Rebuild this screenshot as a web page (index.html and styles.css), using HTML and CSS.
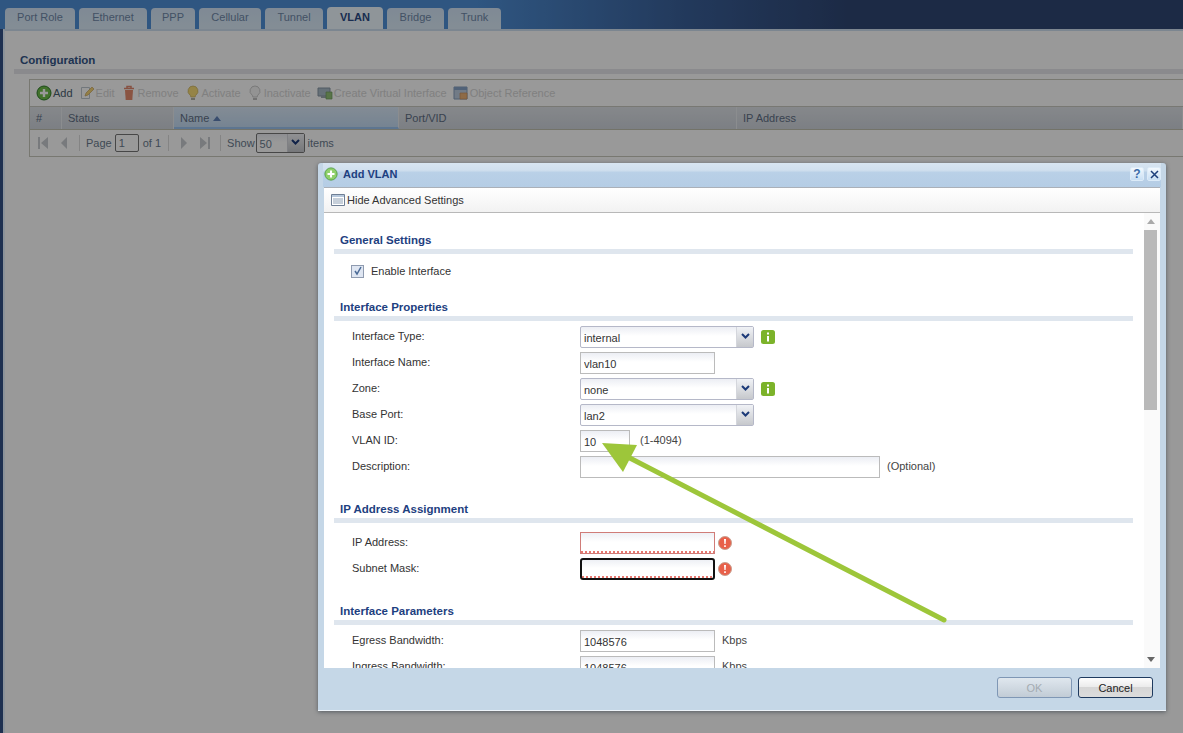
FILE: index.html
```html
<!DOCTYPE html>
<html lang="en">
<head>
<meta charset="utf-8">
<title>VLAN</title>
<link rel="stylesheet" href="styles.css">
</head>
<body>
<div class="app">
  <nav class="tabs">
    <a class="tab">Port Role</a><a class="tab">Ethernet</a><a class="tab">PPP</a><a class="tab">Cellular</a><a class="tab">Tunnel</a><a class="tab active">VLAN</a><a class="tab">Bridge</a><a class="tab">Trunk</a>
  </nav>
  <main class="panel">
    <h2 class="page-heading">Configuration</h2>
    <div class="grid-box">
      <div class="grid-toolbar">
        <span class="tool on"><svg class="ic" viewBox="0 0 16 16"><circle cx="8" cy="8" r="7" fill="#6fbf4a" stroke="#2f7d2a"/><path d="M8 4v8M4 8h8" stroke="#fff" stroke-width="2.4"/></svg>Add</span>
        <span class="tool"><svg class="ic" viewBox="0 0 16 16"><path d="M2.500 2.500h8v11h-8z" fill="#fff" stroke="#aab4c0"/><path d="M6 11l1-3 6-6 2 2-6 6z" fill="#f2c649" stroke="#b98a2a" stroke-width=".7"/></svg>Edit</span>
        <span class="tool"><svg class="ic" viewBox="0 0 16 16"><path d="M3 3.500h10M6 3V1.500h4V3" stroke="#d8603f" fill="none" stroke-width="1.500"/><path d="M4 5h8l-.7 10H4.700z" fill="#e0663f"/></svg>Remove</span>
        <span class="tool"><svg class="ic" viewBox="0 0 16 16"><path d="M8 1a5 5 0 0 0-3 9c.6.6.8 1 .8 2h4.400c0-1 .2-1.400.8-2a5 5 0 0 0-3-9z" fill="#f6d24a" stroke="#b8962a" stroke-width=".7"/><path d="M6 13h4v2H6z" fill="#9a9a8a"/></svg>Activate</span>
        <span class="tool"><svg class="ic" viewBox="0 0 16 16"><path d="M8 1a5 5 0 0 0-3 9c.6.6.8 1 .8 2h4.400c0-1 .2-1.400.8-2a5 5 0 0 0-3-9z" fill="#f4f4f4" stroke="#aaa" stroke-width=".8"/><path d="M6 13h4v2H6z" fill="#aaa"/></svg>Inactivate</span>
        <span class="tool"><svg class="ic" viewBox="0 0 16 16"><path d="M1 3h12v8H1z" fill="#8fa6b8" stroke="#5f7486"/><path d="M4 11h6v2H4z" fill="#7b8c98"/><path d="M9 7h6v7H9z" fill="#6fb04a" stroke="#3f7d2a" stroke-width=".7"/></svg>Create Virtual Interface</span>
        <span class="tool"><svg class="ic" viewBox="0 0 16 16"><path d="M1 2h13v12H1z" fill="#a9bdd6" stroke="#5f7fa6"/><path d="M1 2h13v3H1z" fill="#5f86b8"/><path d="M7 8h7v6H7z" fill="#e89a4a" stroke="#b56f2a" stroke-width=".7"/></svg>Object Reference</span>
      </div>
      <div class="grid-head">
        <div class="col">#</div>
        <div class="col">Status</div>
        <div class="col sorted">Name <svg class="sort" viewBox="0 0 8 5"><path d="M0 5l4-5 4 5z"/></svg></div>
        <div class="col">Port/VID</div>
        <div class="col">IP Address</div>
      </div>
      <div class="pager">
        <svg class="nav" viewBox="0 0 12 14"><path d="M1 1h2v12H1zM11 1v12L4 7z"/></svg>
        <svg class="nav" viewBox="0 0 12 14"><path d="M9 1v12L3 7z"/></svg>
        <i class="sep"></i>
        <span>Page</span>
        <input class="page-input" value="1" aria-label="Page">
        <span class="of-total">of 1</span>
        <i class="sep"></i>
        <svg class="nav nav-next" viewBox="0 0 12 14"><path d="M3 1v12l6-6z"/></svg>
        <svg class="nav" viewBox="0 0 12 14"><path d="M1 1v12l7-6zM9 1h2v12H9z"/></svg>
        <i class="sep"></i>
        <span>Show</span>
        <div class="combo page-size"><span class="combo-value">50</span><span class="combo-arrow"><svg viewBox="0 0 9 6"><path d="M1 1l3.500 3.500L8 1" fill="none" stroke="#1c3a78" stroke-width="2"/></svg></span></div>
        <span>items</span>
      </div>
    </div>
  </main>
</div>

<div class="overlay"></div>

<section class="dialog">
  <header class="dialog-title">
    <svg class="title-ic" viewBox="0 0 16 16"><circle cx="8" cy="8" r="7" fill="#8fd06a" stroke="#4f9d3f"/><path d="M8 4v8M4 8h8" stroke="#fff" stroke-width="2.400"/></svg>
    <span class="dialog-name">Add VLAN</span>
    <span class="win-btn">?</span>
    <span class="win-btn"><svg viewBox="0 0 9 9"><path d="M1 1l7 7M8 1L1 8" stroke="#1c3f7c" stroke-width="1.500"/></svg></span>
  </header>
  <div class="dialog-toolbar">
    <svg class="ic" viewBox="0 0 16 16"><path d="M1.500 2.500h13v11h-13z" fill="#fff" stroke="#6f7f95"/><path d="M2 3h12v2H2z" fill="#b7c8dc"/><path d="M3 7h10M3 9h10M3 11h10" stroke="#8ea0b5"/></svg>
    Hide Advanced Settings
  </div>
  <div class="dialog-body">
    <div class="form-scroll">
      <h3 class="sec-heading">General Settings</h3>
      <div class="sec sec-first">
        <label class="check-row"><span class="check"><svg viewBox="0 0 10 10"><path d="M2 5l2 3 4-7" fill="none" stroke="#4a6a96" stroke-width="1.500"/></svg></span>Enable Interface</label>
      </div>

      <h3 class="sec-heading">Interface Properties</h3>
      <div class="sec">
        <div class="row"><span class="lbl">Interface Type:</span>
          <div class="combo wide"><span class="combo-value">internal</span><span class="combo-arrow"><svg viewBox="0 0 9 6"><path d="M1 1l3.500 3.500L8 1" fill="none" stroke="#1c3a78" stroke-width="2"/></svg></span></div>
          <svg class="info" viewBox="0 0 14 14"><rect width="14" height="14" rx="2.500" fill="#7cb32a"/><path d="M6 2.500h2v2H6zM6 6h2v5.500H6z" fill="#fff"/></svg>
        </div>
        <div class="row"><span class="lbl">Interface Name:</span><input class="field md" value="vlan10" aria-label="Interface Name"></div>
        <div class="row"><span class="lbl">Zone:</span>
          <div class="combo wide"><span class="combo-value">none</span><span class="combo-arrow"><svg viewBox="0 0 9 6"><path d="M1 1l3.500 3.500L8 1" fill="none" stroke="#1c3a78" stroke-width="2"/></svg></span></div>
          <svg class="info" viewBox="0 0 14 14"><rect width="14" height="14" rx="2.500" fill="#7cb32a"/><path d="M6 2.500h2v2H6zM6 6h2v5.500H6z" fill="#fff"/></svg>
        </div>
        <div class="row"><span class="lbl">Base Port:</span>
          <div class="combo wide"><span class="combo-value">lan2</span><span class="combo-arrow"><svg viewBox="0 0 9 6"><path d="M1 1l3.500 3.500L8 1" fill="none" stroke="#1c3a78" stroke-width="2"/></svg></span></div>
        </div>
        <div class="row"><span class="lbl">VLAN ID:</span><input class="field sm" value="10" aria-label="VLAN ID"><span class="hint">(1-4094)</span></div>
        <div class="row"><span class="lbl">Description:</span><input class="field lg" aria-label="Description"><span class="hint near">(Optional)</span></div>
      </div>

      <h3 class="sec-heading">IP Address Assignment</h3>
      <div class="sec sec-ip">
        <div class="row"><span class="lbl">IP Address:</span><input class="field md invalid" aria-label="IP Address">
          <svg class="err" viewBox="0 0 14 14"><circle cx="7" cy="7" r="6.500" fill="#e8604a" stroke="#c8a090"/><path d="M6 3h2l-.4 5H6.400zM6.200 9.300h1.600v1.700H6.200z" fill="#fff"/></svg></div>
        <div class="row"><span class="lbl">Subnet Mask:</span><input class="field md invalid focus" aria-label="Subnet Mask">
          <svg class="err" viewBox="0 0 14 14"><circle cx="7" cy="7" r="6.500" fill="#e8604a" stroke="#c8a090"/><path d="M6 3h2l-.4 5H6.400zM6.200 9.300h1.600v1.700H6.200z" fill="#fff"/></svg></div>
      </div>

      <h3 class="sec-heading">Interface Parameters</h3>
      <div class="sec">
        <div class="row"><span class="lbl">Egress Bandwidth:</span><input class="field md" value="1048576" aria-label="Egress Bandwidth"><span class="hint unit">Kbps</span></div>
        <div class="row"><span class="lbl">Ingress Bandwidth:</span><input class="field md" value="1048576" aria-label="Ingress Bandwidth"><span class="hint unit">Kbps</span></div>
      </div>
    </div>
    <div class="scrollbar">
      <svg class="sb-arrow" viewBox="0 0 8 5"><path d="M0 5l4-5 4 5z"/></svg>
      <div class="sb-track"><div class="sb-thumb"></div></div>
      <svg class="sb-arrow" viewBox="0 0 8 5"><path d="M0 0l4 5 4-5z"/></svg>
    </div>
  </div>
  <footer class="dialog-footer">
    <button class="btn" disabled>OK</button>
    <button class="btn primary">Cancel</button>
  </footer>
</section>

<svg class="arrow" viewBox="0 0 1183 733" aria-hidden="true">
  <path d="M624 455L944 620" stroke="#9dc63a" stroke-width="5" stroke-linecap="round"/>
  <path d="M602 443L637 445L623 472Z" fill="#9dc63a"/>
</svg>
</body>
</html>
```

FILE: styles.css
```css
* { box-sizing: border-box; }
html, body { margin: 0; height: 100%; }
body {
  position: relative;
  width: 1183px;
  height: 733px;
  overflow: hidden;
  font: 11px "Liberation Sans", Arial, sans-serif;
  color: #333;
  background: #335085;
}
.app { display: flex; flex-direction: column; height: 100%; }

.tabs {
  display: grid;
  grid-template-columns: 70px 68px 44px 62px 58px 56px 57px 53px;
  column-gap: 4px;
  align-items: end;
  height: 29px;
  padding-left: 5px;
  background: linear-gradient(90deg, #4f90d8 0, #4f90d8 40%, #3a6099 58%, #2f4673 72%);
}
.tab {
  display: flex;
  align-items: center;
  justify-content: center;
  height: 21px;
  padding-bottom: 3px;
  border-radius: 4px 4px 0 0;
  background: linear-gradient(#d4e6f8, #dcecf8);
  color: #6f88a8;
}
.tab.active { height: 24px; margin-bottom: -2px; padding-bottom: 4px; background: #eef8ff; color: #2b4b85; font-weight: 700; }

.panel {
  flex: 1;
  margin-left: 3px;
  padding: 21px 0 0 9px;
  background: #fff;
  border-top: 2px solid #cfe0f0;
  border-left: 2px solid #e8f4ff;
}
.page-heading {
  margin: 0;
  height: 22px;
  padding-left: 6px;
  font-size: 11.5px;
  line-height: 16px;
  color: #345588;
  border-bottom: 5px solid #e6e6ec;
}
.grid-box {
  margin: 5px 0 0 15px;
  border: 1px solid #c8c8bc;
  border-right: 0;
}

.grid-toolbar {
  display: flex;
  align-items: center;
  gap: 6px;
  height: 26px;
  padding-left: 6px;
  color: #d6d6d6;
}
.tool { display: inline-flex; align-items: center; gap: 1px; }
.tool.on { color: #4a6070; }
.tool:not(.on) .ic { opacity: .75; }
.ic { width: 16px; height: 16px; flex: none; }

.grid-head {
  display: grid;
  grid-template-columns: 32px 112px 225px 338px 1fr;
  height: 24px;
  background: linear-gradient(#dfe3e8, #cfd4dc);
  border-top: 1px solid #c8c8c0;
  border-bottom: 1px solid #c0c0b0;
  color: #606f85;
}
.col {
  display: flex;
  align-items: center;
  gap: 4px;
  padding-left: 6px;
  border-right: 1px solid #e8ebef;
}
.col.sorted { padding-top: 2px; background: linear-gradient(#dbe9f8, #c4dcf4); border-bottom: 2px solid #9cc4f0; }
.sort { width: 8px; height: 5px; fill: #5f80b8; }

.pager {
  display: flex;
  align-items: center;
  height: 26px;
  padding-left: 7px;
  gap: 3px;
  color: #6a7b8e;
}
.nav { width: 12px; height: 14px; fill: #c8ccd0; margin-right: 6px; flex: none; }
.nav-next { margin-left: 3px; }
.sep { width: 1px; height: 16px; background: #dcdcdc; margin-right: 3px; flex: none; }
.page-input {
  width: 24px;
  height: 18px;
  margin: 0 1px 0 0;
  padding: 0 3px;
  border: 1px solid #777;
  border-radius: 2px;
  background: #fff;
  font: inherit;
  color: #6a7b8e;
}
.of-total { margin-right: 4px; }

.overlay { position: absolute; inset: 0; background: rgba(0, 0, 0, .4); }

.combo {
  display: flex;
  align-items: center;
  height: 22px;
  border: 1px solid #b5b8c8;
  border-radius: 2px;
  background: linear-gradient(#eceef4, #fff 45%);
  color: #333;
}
.combo.wide { width: 174px; }
.combo.page-size { width: 49px; height: 20px; margin-left: -2px; border-color: #777; color: #6a7b8e; }
.combo-value { flex: 1; padding: 2px 0 0 3px; }
.combo-arrow {
  display: flex;
  align-items: center;
  justify-content: center;
  width: 17px;
  height: 100%;
  background: linear-gradient(#f0f2f6, #c6c8cc);
  border-left: 1px solid #d4d6dc;
}
.combo-arrow svg { width: 9px; height: 6px; margin-top: -3px; }

.dialog {
  position: absolute;
  left: 318px;
  top: 163px;
  width: 848px;
  height: 548px;
  display: flex;
  flex-direction: column;
  padding: 0 6px;
  background: #c5d7e7;
  border-bottom: 1px solid #eef4fa;
  border-radius: 3px 3px 0 0;
  box-shadow: 0 1px 4px rgba(40, 50, 60, .6);
}
.dialog-title {
  display: flex;
  align-items: center;
  flex: none;
  height: 24px;
  margin: 0 -1px;
  padding: 0 0 2px 1px;
  background: linear-gradient(#d8e5f1 0, #d0dfee 30%, #b9d0e7 40%, #b5cde5);
  color: #1e4080;
  font-weight: 700;
}
.title-ic { width: 14px; height: 14px; margin-right: 5px; }
.dialog-name { flex: 1; }
.win-btn {
  display: flex;
  align-items: center;
  justify-content: center;
  width: 14px;
  height: 14px;
  margin-left: 3px;
  border: 1px solid #dcebf8;
  border-radius: 2px;
  background: linear-gradient(#f2f8fd, #c8dff4);
  color: #3c6ca8;
  font-size: 12px;
}
.win-btn svg { width: 9px; height: 9px; }
.dialog-toolbar {
  flex: none;
  display: flex;
  align-items: center;
  gap: 1px;
  height: 26px;
  padding: 0 0 1px 6px;
  border-top: 1px solid #aab0b8;
  border-bottom: 1px solid #b8b8b8;
  background: linear-gradient(#fff, #f2f2f2);
  color: #333;
}
.dialog-body {
  flex: 1;
  min-height: 0;
  display: flex;
  background: #fff;
}
.form-scroll {
  flex: 1;
  overflow: hidden;
  padding: 21px 11px 0 10px;
}
.sec-heading {
  margin: 0;
  height: 20px;
  padding-left: 6px;
  font-size: 11.5px;
  line-height: 13px;
  color: #1e4080;
  border-bottom: 5px solid #dfe6ee;
}
.sec { padding: 5px 0 25px 18px; display: flex; flex-direction: column; gap: 4px; }
.sec-first { padding-bottom: 20px; }
.sec-ip { padding-top: 9px; }
.row { display: flex; align-items: center; height: 22px; flex: none; }
.lbl { width: 228px; flex: none; margin-top: -2px; }
.check-row { display: flex; align-items: center; gap: 7px; height: 22px; margin-left: -1px; padding-top: 2px; }
.check {
  display: flex;
  align-items: center;
  justify-content: center;
  width: 13px;
  height: 13px;
  border: 1px solid #8f9bb0;
  background: #dfe6f2;
}
.check svg { width: 10px; height: 10px; }
.field {
  height: 22px;
  padding: 2px 3px 0;
  border: 1px solid #bbb;
  background: linear-gradient(#eceef4, #fff 45%);
  font: inherit;
  color: #333;
  flex: none;
}
.field.sm { width: 50px; }
.field.md { width: 135px; }
.field.lg { width: 300px; }
.field.invalid {
  border-color: #d07c78;
  background:
    repeating-linear-gradient(90deg, #e87870 0 2px, #fff 2px 4px) left bottom / 100% 2px no-repeat,
    linear-gradient(#eef0f5, #fff 45%);
}
.field.focus { border: 2px solid #111; border-radius: 3px; outline: 0; }
.hint { margin-left: 10px; margin-top: -2px; color: #444; }
.hint.near { margin-left: 7px; }
.hint.unit { margin-left: 7px; margin-top: -2px; }
.info { width: 14px; height: 14px; margin-left: 7px; margin-top: -1px; }
.err { width: 14px; height: 14px; margin-left: 3px; margin-top: -1px; }

.scrollbar {
  flex: none;
  width: 16px;
  padding-right: 2px;
  display: flex;
  flex-direction: column;
  align-items: center;
  background: #fafafa;
}
.sb-arrow { width: 8px; height: 5px; flex: none; margin: 6px 0; fill: #666; }
.sb-arrow:first-child { fill: #aaa; }
.sb-track { flex: 1; width: 14px; }
.sb-thumb { width: 13px; height: 180px; background: #b9b9b9; }

.dialog-footer {
  flex: none;
  display: flex;
  justify-content: flex-end;
  gap: 6px;
  height: 42px;
  padding: 9px 7px 0 0;
}
.btn {
  width: 75px;
  height: 21px;
  padding: 0;
  border: 1px solid #1e3a5f;
  border-radius: 3px;
  background: linear-gradient(#fdfdfd 0, #ececec 45%, #d6d6d6 50%, #dcdcdc);
  font: inherit;
  color: #222;
}
.btn:disabled {
  border-color: #7f97b5;
  background: linear-gradient(#dfe7ee, #c2ccd6);
  color: #a4abb2;
}

.arrow { position: absolute; inset: 0; width: 1183px; height: 733px; pointer-events: none; }
```
